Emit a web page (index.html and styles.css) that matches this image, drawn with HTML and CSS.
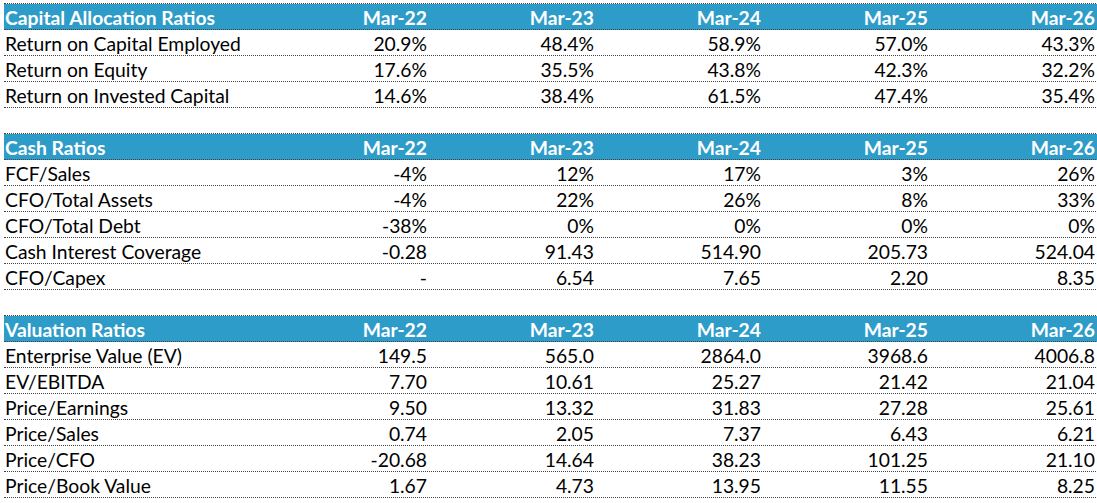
FILE: index.html
```html
<!DOCTYPE html>
<html>
<head>
<meta charset="utf-8">
<link rel="stylesheet" href="styles.css">
</head>
<body>
<div class="sheet">
  <div class="row head"><div class="c lbl">Capital Allocation Ratios</div><div class="c">Mar-22</div><div class="c">Mar-23</div><div class="c">Mar-24</div><div class="c">Mar-25</div><div class="c">Mar-26</div></div>
  <div class="row"><div class="c lbl">Return on Capital Employed</div><div class="c">20.9%</div><div class="c">48.4%</div><div class="c">58.9%</div><div class="c">57.0%</div><div class="c">43.3%</div></div>
  <div class="row"><div class="c lbl">Return on Equity</div><div class="c">17.6%</div><div class="c">35.5%</div><div class="c">43.8%</div><div class="c">42.3%</div><div class="c">32.2%</div></div>
  <div class="row"><div class="c lbl">Return on Invested Capital</div><div class="c">14.6%</div><div class="c">38.4%</div><div class="c">61.5%</div><div class="c">47.4%</div><div class="c">35.4%</div></div>
  <div class="row blank"></div>
  <div class="row head"><div class="c lbl">Cash Ratios</div><div class="c">Mar-22</div><div class="c">Mar-23</div><div class="c">Mar-24</div><div class="c">Mar-25</div><div class="c">Mar-26</div></div>
  <div class="row"><div class="c lbl">FCF/Sales</div><div class="c">-4%</div><div class="c">12%</div><div class="c">17%</div><div class="c">3%</div><div class="c">26%</div></div>
  <div class="row"><div class="c lbl">CFO/Total Assets</div><div class="c">-4%</div><div class="c">22%</div><div class="c">26%</div><div class="c">8%</div><div class="c">33%</div></div>
  <div class="row"><div class="c lbl">CFO/Total Debt</div><div class="c">-38%</div><div class="c">0%</div><div class="c">0%</div><div class="c">0%</div><div class="c">0%</div></div>
  <div class="row"><div class="c lbl">Cash Interest Coverage</div><div class="c">-0.28</div><div class="c">91.43</div><div class="c">514.90</div><div class="c">205.73</div><div class="c">524.04</div></div>
  <div class="row"><div class="c lbl">CFO/Capex</div><div class="c">-</div><div class="c">6.54</div><div class="c">7.65</div><div class="c">2.20</div><div class="c">8.35</div></div>
  <div class="row blank"></div>
  <div class="row head"><div class="c lbl">Valuation Ratios</div><div class="c">Mar-22</div><div class="c">Mar-23</div><div class="c">Mar-24</div><div class="c">Mar-25</div><div class="c">Mar-26</div></div>
  <div class="row"><div class="c lbl">Enterprise Value (EV)</div><div class="c">149.5</div><div class="c">565.0</div><div class="c">2864.0</div><div class="c">3968.6</div><div class="c">4006.8</div></div>
  <div class="row"><div class="c lbl">EV/EBITDA</div><div class="c">7.70</div><div class="c">10.61</div><div class="c">25.27</div><div class="c">21.42</div><div class="c">21.04</div></div>
  <div class="row"><div class="c lbl">Price/Earnings</div><div class="c">9.50</div><div class="c">13.32</div><div class="c">31.83</div><div class="c">27.28</div><div class="c">25.61</div></div>
  <div class="row"><div class="c lbl">Price/Sales</div><div class="c">0.74</div><div class="c">2.05</div><div class="c">7.37</div><div class="c">6.43</div><div class="c">6.21</div></div>
  <div class="row"><div class="c lbl">Price/CFO</div><div class="c">-20.68</div><div class="c">14.64</div><div class="c">38.23</div><div class="c">101.25</div><div class="c">21.10</div></div>
  <div class="row"><div class="c lbl">Price/Book Value</div><div class="c">1.67</div><div class="c">4.73</div><div class="c">13.95</div><div class="c">11.55</div><div class="c">8.25</div></div>
</div>
</body>
</html>
```
FILE: styles.css
```css
html, body {
  margin: 0;
  padding: 0;
  background: #fff;
}
.sheet {
  margin: 3px 0 0 4px;
  width: 1094px;
  border-top: 1px dotted #444;
  font-family: Lato, "Liberation Sans", sans-serif;
  font-size: 19.3px;
  color: #000;
}
.row {
  display: grid;
  grid-template-columns: 259px repeat(5, 167px);
  height: 26px;
  box-sizing: border-box;
  border-bottom: 1px dotted #444;
}
.c {
  display: flex;
  align-items: flex-end;
  justify-content: flex-end;
  padding: 0 3px 0 0;
  line-height: 22px;
  white-space: nowrap;
}
.c.lbl {
  justify-content: flex-start;
  padding-left: 1px;
}
.head {
  background: #2e9cc9;
  color: #fff;
  font-weight: bold;
}
```
